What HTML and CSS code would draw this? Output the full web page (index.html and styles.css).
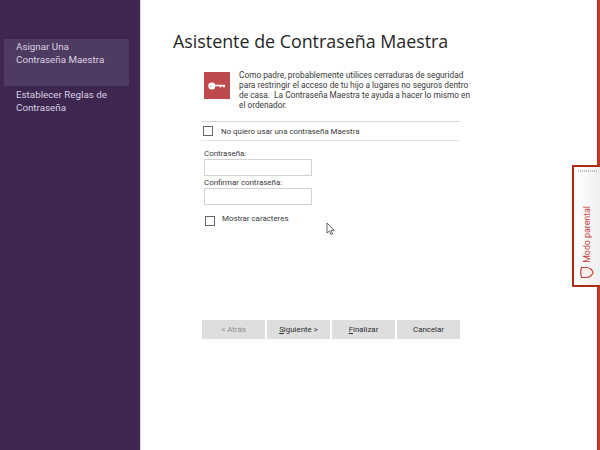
FILE: index.html
```html
<!DOCTYPE html>
<html lang="es">
<head>
<meta charset="utf-8">
<title>Asistente de Contraseña Maestra</title>
<link rel="stylesheet" href="styles.css">
</head>
<body>
<div class="app">
  <nav class="sidebar">
    <div class="nav-item active">Asignar Una<br>Contraseña Maestra</div>
    <div class="nav-item">Establecer Reglas de<br>Contraseña</div>
  </nav>
  <main class="main">
    <h1 class="title">Asistente de Contraseña Maestra</h1>
    <div class="panel">
      <div class="intro">
        <div class="key-box">
          <svg width="18" height="8" viewBox="0 0 18 8"><path d="M4 0.500a3.500 3.500 0 0 1 3.300 2.300H17v2.400h-2v-1h-1.500v1h-2v-1H7.300A3.500 3.500 0 1 1 4 0.500z" fill="#fff"/><circle cx="3" cy="4" r="0.800" fill="#d98a8c"/></svg>
        </div>
        <p class="intro-text">Como padre, probablemente utilices cerraduras de seguridad<br>para restringir el acceso de tu hijo a lugares no seguros dentro<br>de casa.&nbsp; La Contraseña Maestra te ayuda a hacer lo mismo en<br>el ordenador.</p>
      </div>
      <div class="opt-out">
        <span class="check"></span>
        <span>No quiero usar una contraseña Maestra</span>
      </div>
      <div class="fields">
        <div class="label">Contraseña:</div>
        <div class="input"></div>
        <div class="label second">Confirmar contraseña:</div>
        <div class="input"></div>
      </div>
      <div class="show-row">
        <span class="check"></span>
        <span class="show-label">Mostrar caracteres</span>
      </div>
      <div class="buttons">
        <div class="btn disabled">&lt; Atrás</div>
        <div class="btn"><span><u>S</u>iguiente &gt;</span></div>
        <div class="btn"><span><u>F</u>inalizar</span></div>
        <div class="btn">Cancelar</div>
      </div>
    </div>
  </main>
  <svg class="cursor" width="10" height="14" viewBox="0 0 10 14"><path d="M1 1v10l2.400-2 1.600 3.600 1.600-.7L5 8.400h3.200z" fill="#fff" stroke="#555" stroke-width="0.900"/></svg>
  <div class="edge"></div>
  <aside class="tab">
    <div class="tab-dots"></div>
    <div class="tab-label">
      <svg class="tab-icon" width="14" height="13" viewBox="0 0 14 13"><path d="M1.500 1.500h5c3 0 6 2.500 6.500 5-.5 2.500-3.500 5-6.500 5h-5C.7 9 .7 4 1.500 1.500z" fill="#fbeeee" stroke="#c8443a" stroke-width="1.200"/></svg>
      <span class="tab-text">Modo parental</span>
    </div>
  </aside>
</div>
</body>
</html>
```
FILE: styles.css
```css
* { box-sizing: border-box; }
html, body { margin: 0; height: 100%; }
body { font-family: "Roboto", "Open Sans", sans-serif; background: #fff; color: #333; overflow: hidden; }
.app { position: relative; display: flex; width: 600px; height: 450px; }

.sidebar { width: 141px; flex: none; background: #3d2750; padding: 39px 11px 0 4px; border-right: 1px solid #d8d4dc; }
.nav-item { height: 47px; padding: 1px 0 0 12px; font-size: 9.8px; line-height: 13px; color: #d9d0e0; }
.nav-item.active { background: #4f3b62; margin-bottom: 1px; }

.main { flex: 1; padding: 29px 0 0 32px; }
.title { margin: 0; font-family: "Open Sans", sans-serif; font-size: 17.85px; line-height: 24px; font-weight: 400; color: #262626; }
.panel { width: 259px; margin: 19px 0 0 28px; }

.intro { display: flex; gap: 9px; padding-left: 3px; height: 49px; }
.key-box { width: 26px; height: 27px; flex: none; background: #bf4a4d; display: flex; align-items: center; justify-content: center; }
.intro-text { margin: -2px 0 0; font-size: 8.3px; line-height: 10px; color: #3a3a3a; white-space: nowrap; }

.opt-out { display: flex; align-items: center; gap: 8px; height: 20px; border-top: 1px solid #d4d4d4; border-bottom: 1px solid #e4e4e4; padding-left: 2px; font-size: 7.9px; color: #3a3a3a; }
.check { width: 10px; height: 10px; flex: none; border: 1px solid #666; background: #fff; }

.fields { padding: 8px 0 0 3px; }
.label { font-size: 7.9px; line-height: 10px; color: #3a3a3a; }
.label.second { margin-top: 2px; }
.input { width: 108px; height: 17px; border: 1px solid #d2d2d2; background: #fff; }

.show-row { display: flex; gap: 7px; margin-top: 11px; padding-left: 4px; font-size: 7.9px; color: #3a3a3a; }
.show-label { margin-top: -2px; line-height: 10px; }

.buttons { display: flex; gap: 2px; margin-top: 94px; padding-left: 1px; }
.btn { width: 63px; height: 19px; display: flex; align-items: center; justify-content: center; background: #dedede; font-size: 7.9px; color: #2c2c2c; }
.btn.disabled { color: #8d8d8d; }

.cursor { position: absolute; left: 326px; top: 222px; }
.edge { position: absolute; top: 0; right: 0; width: 3px; height: 450px; background: #c23b22; border-left: 1px solid #b8331c; }
.tab { position: absolute; left: 572px; top: 165px; width: 28px; height: 122px; background: linear-gradient(90deg, #fff, #efefef); border: 2px solid #a92c14; border-right: none; display: flex; flex-direction: column; align-items: center; }
.tab-dots { width: 19px; height: 2px; margin-top: 3px; background: repeating-linear-gradient(90deg, #bbb 0 1px, transparent 1px 2px); }
.tab-label { display: flex; flex-direction: column-reverse; align-items: center; gap: 3px; margin-top: 34px; padding-right: 1px; }
.tab-text { writing-mode: vertical-rl; transform: rotate(180deg); font-size: 8.8px; line-height: 10px; color: #c8443a; white-space: nowrap; }
```
